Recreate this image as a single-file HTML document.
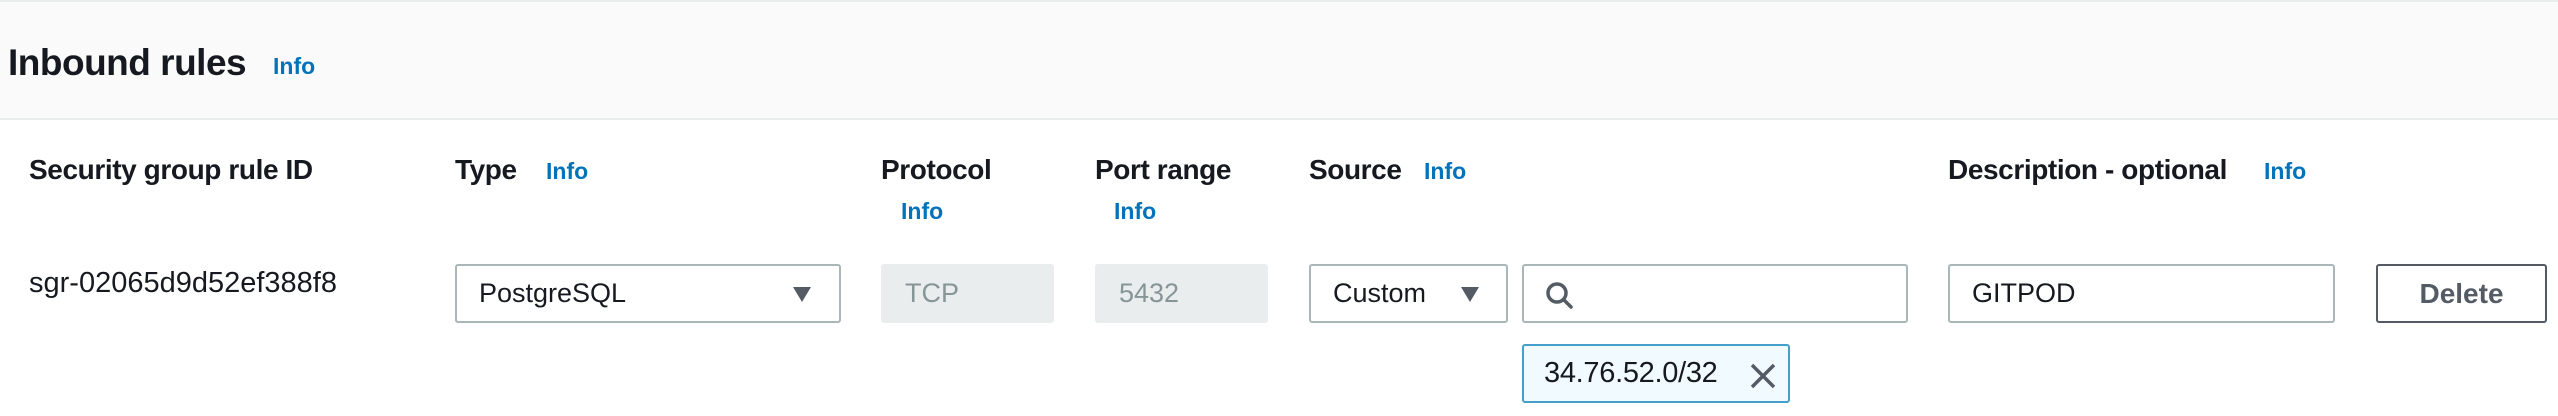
<!DOCTYPE html>
<html><head><meta charset="utf-8"><style>
*{margin:0;padding:0;box-sizing:border-box}
body{width:2558px;height:416px;background:#fff;position:relative;overflow:hidden;font-family:"Liberation Sans",Arial,sans-serif;color:#16191f}
.a{position:absolute;white-space:nowrap}
.hd{position:absolute;left:0;top:0;width:2558px;height:120px;background:#fafafa;border-top:2px solid #eaeded;border-bottom:2px solid #eaeded}
.h{font-weight:bold;font-size:28px;top:154px;letter-spacing:-0.4px}
.i{color:#0073bb;font-weight:bold;font-size:23px}
.box{position:absolute;top:264px;height:59px;border:2px solid #aab7b8;border-radius:3px;background:#fff;font-size:27px;line-height:55px;padding-left:22px}
.dis{background:#eaeded;border-color:#eaeded;color:#879596}
.tri{position:absolute;width:0;height:0;border-left:9px solid transparent;border-right:9px solid transparent;border-top:15px solid #545b64;top:21px}
</style></head><body>
<div class="hd"></div>
<div class="a" style="left:8px;top:42px;font-size:37px;font-weight:bold;letter-spacing:-0.5px">Inbound rules</div>
<div class="a i" style="left:273px;top:53px">Info</div>

<div class="a h" style="left:29px">Security group rule ID</div>
<div class="a h" style="left:455px">Type</div><div class="a i" style="left:546px;top:158px">Info</div>
<div class="a h" style="left:881px">Protocol</div><div class="a i" style="left:901px;top:198px">Info</div>
<div class="a h" style="left:1095px">Port range</div><div class="a i" style="left:1114px;top:198px">Info</div>
<div class="a h" style="left:1309px">Source</div><div class="a i" style="left:1424px;top:158px">Info</div>
<div class="a h" style="left:1948px">Description - optional</div><div class="a i" style="left:2264px;top:158px">Info</div>

<div class="a" style="left:29px;top:267px;font-size:29px">sgr-02065d9d52ef388f8</div>

<div class="box" style="left:455px;width:386px">PostgreSQL<div class="tri" style="left:336px"></div></div>
<div class="box dis" style="left:881px;width:173px">TCP</div>
<div class="box dis" style="left:1095px;width:173px">5432</div>
<div class="box" style="left:1309px;width:199px">Custom<div class="tri" style="left:150px"></div></div>
<div class="box" style="left:1522px;width:386px">
<svg style="position:absolute;left:20px;top:14px" width="32" height="32" viewBox="0 0 32 32"><circle cx="13" cy="13" r="9" fill="none" stroke="#545b64" stroke-width="3.5"/><line x1="19.5" y1="19.5" x2="27" y2="27" stroke="#545b64" stroke-width="3.5" stroke-linecap="round"/></svg></div>
<div class="box" style="left:1948px;width:387px">GITPOD</div>
<div class="box" style="left:2376px;width:171px;border-color:#545b64;color:#545b64;font-weight:bold;padding-left:0;text-align:center;font-size:28px">Delete</div>

<div class="a" style="left:1522px;top:344px;width:268px;height:59px;background:#f1faff;border:2px solid #44a0c8;border-radius:3px;font-size:29px;line-height:55px;padding-left:20px;letter-spacing:-0.3px">34.76.52.0/32
<svg style="position:absolute;left:226px;top:17px" width="26" height="26" viewBox="0 0 26 26"><path d="M2 2L24 24M24 2L2 24" stroke="#545b64" stroke-width="3.5"/></svg></div>
</body></html>
